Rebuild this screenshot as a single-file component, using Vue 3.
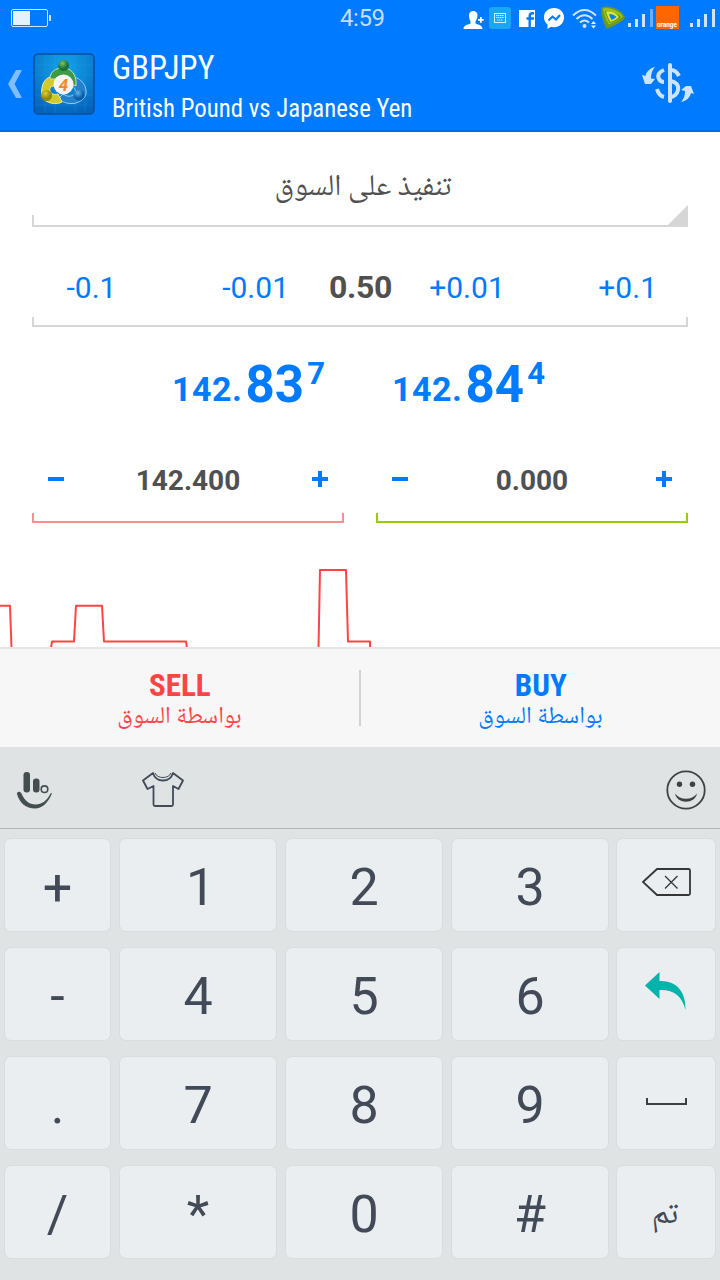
<template>
  <div class="screen">
    <header class="header">
      <div class="status">
        <svg class="battery" width="42" height="18" viewBox="0 0 42 18">
          <rect x="0.5" y="0.5" width="36" height="17" rx="1.5" fill="none" stroke="#cfe4ff" />
          <rect x="2" y="2" width="17" height="14" fill="#e6f1ff" />
          <rect x="38" y="6" width="2" height="6" fill="#cfe4ff" />
        </svg>
        <span class="clock">4:59</span>
        <svg class="tray" width="257" height="36" viewBox="463 0 257 36">
          <!-- contact -->
          <g fill="#fff">
            <path d="M469 15c0-5.500 8.500-5.500 8.500 0 0 3-.8 4.500-2 6.500v2c3 1.500 7 1.500 7 5.500h-19c0-4 4-4 7-5.500v-2c-1-2-1.500-3.500-1.500-6.500z" />
            <path d="M480 17h1.700v2h2v1.700h-2v2H480v-2h-2V19h2z" />
          </g>
          <!-- keyboard -->
          <rect x="489" y="7" width="22" height="22" rx="3" fill="#1ba6f2" />
          <rect x="494.500" y="13.500" width="11" height="9" fill="none" stroke="#d5f0ff" />
          <path d="M496 15.500h8M496 17.500h8M497 20h6" stroke="#d5f0ff" stroke-dasharray="1.5 0.5" />
          <!-- facebook -->
          <rect x="519" y="10" width="16" height="17" fill="#fff" />
          <path fill="none" stroke="#007aff" stroke-width="2.400" d="M529.700 27V16q0-2.800 2.800-2.800h1.500M526.500 18.500h7.500" />
          <!-- messenger -->
          <path fill="#fff" d="M554 8c-6 0-10 4-10 9.300 0 3 1.300 5.500 3.500 7.200V29l3.400-2.200c1 .3 2 .4 3.100.4 6 0 10-4.300 10-9.700S560 8 554 8z" />
          <path fill="none" stroke="#007aff" stroke-width="2" d="M548.500 20.500l4-4 3.500 3 4-4.500" />
          <!-- wifi -->
          <g fill="none" stroke="#cfe4ff" stroke-width="2">
            <path d="M573 15.500q11.500-11 23 0" />
            <path d="M576.500 19q8-7.500 16 0" />
            <path d="M580 22.500q4.500-4 9 0" />
          </g>
          <circle cx="584.500" cy="26" r="2" fill="#cfe4ff" />
          <path fill="#e6f1ff" d="M591 24l2.500-3 2.500 3zM591 25.500h5l-2.500 3z" />
          <!-- etisalat -->
          <path fill="#6b9a1f" d="M601 8c7-4 20 1 24 9 0 4-12 9-18 12-3-4-6-14-6-21z" />
          <path fill="#9dc41f" d="M603 8.500c6-2 16 2 20 8-3 3-9 6-14 8-3-4-5-10-6-16z" />
          <path fill="#5c8f1c" d="M605 11c5-1 12 2 16 6-3 3-7 5-11 6-2-3-4-8-5-12z" />
          <path fill="#d8e63c" d="M606 11.500c5-1 10 1 13 5.500-2 2-5 4-8.500 5-2-3-3.500-6-4.500-10.500z" />
          <path fill="#087cf0" d="M609 14c3 0 5.500 1 7.500 3-1 1-3 2-5 3-1-2-2-4-2.500-6z" />
          <!-- signal 1 -->
          <path fill="#cfe4ff" d="M628 23h3v4h-3zM635 19h3v8h-3zM642 14h3v13h-3z" />
          <path fill="#66afff" d="M650 9h3v18h-3z" />
          <!-- orange -->
          <rect x="656" y="6" width="23" height="23" fill="#ff6600" />
          <text x="657" y="26.500" class="orange" textLength="20" lengthAdjust="spacingAndGlyphs">orange</text>
          <!-- signal 2 -->
          <path fill="#cfe4ff" d="M690 23h3v4h-3zM697 19h3v8h-3zM704 14h3v13h-3zM712 9h3v18h-3z" />
        </svg>
      </div>

      <div class="appbar">
        <svg class="back" width="14" height="28" viewBox="0 0 14 28">
          <path d="M8 0h6L6.500 14 14 28H8L0 14z" fill="#80bcff" />
        </svg>
        <svg class="logo" width="62" height="62" viewBox="0 0 62 62">
          <defs>
            <radialGradient id="bg" cx="50%" cy="20%" r="85%">
              <stop offset="0" stop-color="#12a5ea" />
              <stop offset="1" stop-color="#0560ba" />
            </radialGradient>
            <radialGradient id="green" cx="40%" cy="30%">
              <stop offset="0" stop-color="#7cc46c" />
              <stop offset="1" stop-color="#1d6f34" />
            </radialGradient>
            <radialGradient id="yellow" cx="40%" cy="30%">
              <stop offset="0" stop-color="#d8d03a" />
              <stop offset="1" stop-color="#8f860c" />
            </radialGradient>
            <radialGradient id="blue" cx="40%" cy="30%">
              <stop offset="0" stop-color="#5fb9ee" />
              <stop offset="1" stop-color="#075da8" />
            </radialGradient>
          </defs>
          <rect x="1" y="1" width="60" height="60" rx="4" fill="url(#bg)" stroke="#0750a0" stroke-width="1.500" />
          <path d="M12 2v58M22 2v58M42 2v58M52 2v58M2 12h58M2 22h58M2 42h58M2 52h58" stroke="#2bb0ee" stroke-opacity=".2" />
          <path d="M41 24c8 2 13 9 12 17-3 10-17 13-28 5l5-5c6 4 10 2 12-1 1-3 0-5-3-7z" fill="#2581ca" stroke="#8fcdf5" />
          <path d="M22 23C12 23 7 32 9 44c4 7 15 8 20 5l-4-8c-4 1-7 0-8-3-1-3 1-5 5-5z" fill="#d2c92b" stroke="#eeeaa0" />
          <path d="M17 26c0-7 5-11 13-11s14 6 13 18l-5-2c-1-5-3-8-8-8-4 0-6 1-8 3z" fill="#3d9b46" stroke="#c4e4b0" />
          <circle cx="30.500" cy="12.500" r="5.500" fill="url(#green)" />
          <circle cx="13.500" cy="42.500" r="5.500" fill="url(#yellow)" />
          <circle cx="46" cy="42" r="5.500" fill="url(#blue)" />
          <circle cx="30.500" cy="31.500" r="10" fill="#f5f4f2" />
          <text x="30.500" y="37.500" class="four">4</text>
        </svg>
        <div class="titles">
          <div class="symbol">GBPJPY</div>
          <div class="desc">British Pound vs Japanese Yen</div>
        </div>
        <svg class="exchange" width="52" height="42" viewBox="0 0 52 42">
          <g fill="none" stroke="#cce4ff" stroke-width="4">
            <path d="M28 2v36" stroke-linecap="round" />
            <path d="M29 7c4 0 6 2 8 6M29 18c5 1 8 4 7 9-1 4-4 7-8 7" />
            <path d="M22 7c-5 2-7 5-5 9 1 2 3 3 5 3M15 26c1 4 3 7 7 8" />
          </g>
          <path fill="#cce4ff" d="M13 4c-5 1-9 5-9.500 9L0 12l3 9h6l4-5-4-.5C9 11 10 7 13 4zM39 39c6-1 9-5 10-9l3 1-3-8h-5l-5 4 4 1c0 4-1 8-4 11z" />
        </svg>
      </div>
    </header>

    <main class="form">
      <div class="order-type">
        <span class="ar ar-type" dir="rtl">تنفيذ على السوق</span>
        <svg class="corner" width="20" height="22" viewBox="0 0 20 22">
          <path d="M20 0v22H0v-2z" fill="#d6d6d6" />
        </svg>
      </div>

      <div class="volume">
        <span v-for="s in steps" :key="s.label" :class="['step', s.kind]">{{ s.label }}</span>
      </div>

      <div class="quotes">
        <div v-for="q in quotes" :key="q.big" class="quote">
          <span class="q-base">{{ q.base }}</span>
          <span class="q-big">{{ q.big }}</span>
          <span class="q-tick">{{ q.tick }}</span>
        </div>
      </div>

      <div class="levels">
        <div v-for="l in levels" :key="l.kind" :class="['level', l.kind]">
          <svg width="16" height="16" viewBox="0 0 16 16"><path d="M0 6h16v4H0z" fill="#007aff" /></svg>
          <span class="level-value">{{ l.value }}</span>
          <svg width="16" height="16" viewBox="0 0 16 16"><path d="M0 6h6V0h4v6h6v4h-6v6H6v-6H0z" fill="#007aff" /></svg>
        </div>
      </div>

      <svg class="chart" width="720" height="124" viewBox="0 523 720 124">
        <g fill="none" stroke="#ff4444" stroke-width="2" stroke-linejoin="round">
          <path d="M0 605.800h10l1.500 42" />
          <path d="M51 648l1-6.500h22l2-35.700h26l2 35.700h82l1 6.500" />
          <path d="M318.500 648l1.500-78h26l2 71.500h22v6.500" />
        </g>
      </svg>
    </main>

    <div class="actions">
      <div class="action sell">
        <span class="act">SELL</span>
        <span class="ar ar-act" dir="rtl">بواسطة السوق</span>
      </div>
      <div class="divider"></div>
      <div class="action buy">
        <span class="act">BUY</span>
        <span class="ar ar-act" dir="rtl">بواسطة السوق</span>
      </div>
    </div>

    <div class="keyboard">
      <div class="tools">
        <svg width="36" height="38" viewBox="0 0 36 38">
          <rect x="6.500" y="1" width="6.500" height="20.500" rx="3" fill="#434e4e" />
          <rect x="16" y="7.500" width="6.500" height="14" rx="3" fill="#434e4e" />
          <circle cx="27.500" cy="18.200" r="3.300" fill="none" stroke="#434e4e" stroke-width="1.600" />
          <path d="M0 23c0-2.500 3-3 4.500-.5C8 30 12 33.500 18.500 33.500 25 33.500 30 29.500 33.500 22.500c.6-1 1.600-.5 1.200.5C31 32 25 37.500 18 37.500 9 37.500 2.500 32 0 23z" fill="#434e4e" />
        </svg>
        <svg class="shirt" width="42" height="36" viewBox="0 0 42 36">
          <g fill="none" stroke="#414a57" stroke-linejoin="round">
            <path stroke-width="1.800" d="M11 1L1 8.500 5.500 17l6-3v18.500q0 1.500 1.500 1.500h16.500q1.500 0 1.500-1.500V14l5.500 3L41 8.500 31 1C28 11 14 11 11 1z" />
            <path stroke-width="1" d="M13 1c2 6 14 6 16 0" />
          </g>
        </svg>
        <svg class="smiley" width="40" height="40" viewBox="0 0 40 40">
          <circle cx="20" cy="20" r="18.700" fill="none" stroke="#414141" stroke-width="1.800" />
          <circle cx="13.500" cy="14.200" r="2.700" fill="#414141" />
          <circle cx="26.500" cy="14.200" r="2.700" fill="#414141" />
          <path d="M9 23.500c5 7 17 7 22 0-2 11-20 11-22 0z" fill="#414141" />
        </svg>
      </div>

      <div class="keys">
        <div v-for="k in keys" :key="k" class="key">
          <svg v-if="k === 'del'" class="up" width="49" height="28" viewBox="0 0 49 28">
            <path d="M1 14L15 1h31.500Q48 1 48 2.500v23q0 1.500-1.500 1.500H15z" fill="none" stroke="#363636" stroke-width="1.800" />
            <path d="M23 8l12.500 12.500M35.500 8L23 20.500" stroke="#363636" stroke-width="1.300" />
          </svg>
          <svg v-else-if="k === 'enter'" class="up" width="42" height="38" viewBox="0 0 42 38">
            <path d="M0 13.500L14.500 0v9C32 8.500 41 20 40.500 38 37 24 29 17.500 14.500 18v9z" fill="#00b3ab" />
          </svg>
          <svg v-else-if="k === 'space'" class="up space" width="41" height="8" viewBox="0 0 41 8">
            <path d="M1 0v6h39V0" fill="none" stroke="#3e3f40" stroke-width="2" />
          </svg>
          <span v-else-if="k === 'تم'" class="ar ar-done" dir="rtl">{{ k }}</span>
          <span v-else :class="{ one: k === '1' }">{{ k }}</span>
        </div>
      </div>
    </div>
  </div>
</template>

<script setup>
const steps = [
  { label: '-0.1', kind: 'minus-big' },
  { label: '-0.01', kind: 'minus' },
  { label: '0.50', kind: 'current' },
  { label: '+0.01', kind: 'plus' },
  { label: '+0.1', kind: 'plus-big' },
]

const quotes = [
  { base: '142.', big: '83', tick: '7' },
  { base: '142.', big: '84', tick: '4' },
]

const levels = [
  { kind: 'stop', value: '142.400' },
  { kind: 'take', value: '0.000' },
]

const keys = [
  '+', '1', '2', '3', 'del',
  '-', '4', '5', '6', 'enter',
  '.', '7', '8', '9', 'space',
  '/', '*', '0', '#', 'تم',
]
</script>

<style>
body {
  margin: 0;
}
</style>

<style scoped>
.screen {
  width: 720px;
  height: 1280px;
  overflow: hidden;
  display: flex;
  flex-direction: column;
  background: #fff;
  font-family: Roboto, 'Noto Sans Arabic', 'DejaVu Sans', sans-serif;
}
svg {
  display: block;
  flex: none;
}
.header {
  box-sizing: border-box;
  height: 132px;
  background: #007aff;
  color: #fff;
  border-bottom: 2px solid #006ce0;
}
.status {
  height: 36px;
  display: flex;
  align-items: center;
}
.battery {
  margin-left: 11px;
}
.clock {
  margin-left: 287px;
  font-size: 24px;
  line-height: 36px;
  letter-spacing: -0.4px;
  color: #c4dfff;
}
.tray {
  margin-left: auto;
}
.orange {
  font: 700 7px Roboto, sans-serif;
  fill: #fff;
}
.appbar {
  box-sizing: border-box;
  height: 94px;
  padding-top: 2px;
  display: flex;
  align-items: center;
}
.back {
  margin-left: 8px;
}
.logo {
  margin-left: 11px;
}
.four {
  font: italic 700 17px Roboto, sans-serif;
  fill: #f08a24;
  text-anchor: middle;
}
.titles {
  margin-left: 17px;
  padding-top: 6px;
  white-space: nowrap;
  font-family: 'Roboto Condensed', Roboto, sans-serif;
  font-stretch: 75%;
}
.symbol {
  font-size: 34px;
  line-height: 41px;
  transform: scaleX(0.955);
  transform-origin: left;
}
.desc {
  font-size: 26px;
  line-height: 40px;
  transform: scaleX(0.953);
  transform-origin: left;
}
.exchange {
  margin-left: auto;
  margin-right: 26px;
}
.ar {
  font-family: 'Noto Naskh Arabic UI', 'Noto Naskh Arabic', 'Noto Sans Arabic', 'DejaVu Sans', sans-serif;
}
.order-type {
  height: 95px;
  margin: 0 32px;
  display: flex;
  justify-content: center;
  position: relative;
  background: linear-gradient(#d6d6d6, #d6d6d6) left bottom / 2px 12px no-repeat,
    linear-gradient(#d6d6d6, #d6d6d6) left bottom / 100% 2px no-repeat;
}
.ar-type {
  margin-left: 6px;
  font-size: 30px;
  line-height: 111px;
  color: #505050;
}
.corner {
  position: absolute;
  right: 0;
  bottom: 0;
}
.volume {
  height: 100px;
  margin: 0 32px;
  display: grid;
  grid-template-columns: 119px 147px 125px 88px 1fr;
  font-size: 30px;
  line-height: 121px;
  color: #007aff;
  text-align: center;
  background: linear-gradient(#d6d6d6, #d6d6d6) left bottom / 2px 10px no-repeat,
    linear-gradient(#d6d6d6, #d6d6d6) right bottom / 2px 10px no-repeat,
    linear-gradient(#d6d6d6, #d6d6d6) left bottom / 100% 2px no-repeat;
}
.minus {
  text-align: right;
  padding-right: 9px;
}
.current {
  font-size: 32px;
  font-weight: 700;
  line-height: 121px;
  letter-spacing: -0.3px;
  color: #505050;
}
.plus-big {
  text-align: right;
  padding-right: 31px;
}
.quotes {
  height: 110px;
  display: flex;
  padding-left: 172px;
  gap: 67px;
  color: #007aff;
  font-weight: 700;
}
.quote {
  width: 153px;
  display: flex;
  white-space: nowrap;
}
.q-base {
  width: 74px;
  font-size: 34px;
  line-height: 125px;
  letter-spacing: 0.5px;
}
.q-big {
  width: 62px;
  font-size: 51px;
  line-height: 115px;
}
.q-tick {
  font-size: 31px;
  line-height: 93px;
}
.levels {
  height: 86px;
  margin: 0 32px;
  display: flex;
  gap: 32px;
}
.level {
  box-sizing: border-box;
  flex: 1;
  height: 86px;
  padding: 0 16px 2px;
  display: flex;
  align-items: center;
  justify-content: space-between;
  font-size: 28px;
  font-weight: 700;
  color: #505050;
  --line: linear-gradient(#fb8f8f, #fb8f8f);
  background: var(--line) left bottom / 2px 10px no-repeat,
    var(--line) right bottom / 2px 10px no-repeat,
    var(--line) left bottom / 100% 2px no-repeat;
}
.level.take {
  --line: linear-gradient(#99cc00, #99cc00);
}
.level-value {
  padding-top: 2px;
}
.actions {
  box-sizing: border-box;
  height: 100px;
  display: flex;
  align-items: center;
  background: #f7f7f7;
  border-top: 2px solid #e5e5e5;
}
.action {
  flex: 1;
  height: 98px;
  display: flex;
  flex-direction: column;
  align-items: center;
}
.sell {
  color: #ff4444;
}
.buy {
  color: #007aff;
}
.act {
  margin-top: 16px;
  font-family: 'Roboto Condensed', Roboto, sans-serif;
  font-stretch: 75%;
  font-size: 32px;
  font-weight: 700;
  line-height: 40px;
  transform: scaleX(0.97);
}
.ar-act {
  font-size: 24px;
  line-height: 24px;
}
.divider {
  width: 2px;
  height: 56px;
  background: #d3d3d3;
}
.keyboard {
  flex: 1;
  background: #dfe3e4;
}
.tools {
  box-sizing: border-box;
  height: 82px;
  padding: 4px 14px 0 17px;
  display: flex;
  align-items: center;
  border-bottom: 1px solid #b1b7bb;
}
.shirt {
  margin-left: 89px;
}
.smiley {
  margin-left: auto;
}
.keys {
  display: grid;
  grid-template-columns: 105px 156px 156px 156px 97px;
  grid-auto-rows: 92px;
  column-gap: 10px;
  row-gap: 17px;
  padding: 9.500px 5px 0;
}
.key {
  box-sizing: border-box;
  height: 92px;
  padding-top: 7px;
  display: flex;
  align-items: center;
  justify-content: center;
  border-radius: 6px;
  background: #eaeef1;
  box-shadow: 0 0 0 1px #d8dddf;
  font-size: 52px;
  line-height: 92px;
  color: #414a56;
}
.key:nth-child(5n) {
  margin-left: -1px;
}
.one {
  padding-left: 5px;
}
.up {
  margin-bottom: 12px;
}
.space {
  margin-bottom: 9px;
}
.ar-done {
  margin-right: 2px;
  font-size: 33px;
}
</style>
